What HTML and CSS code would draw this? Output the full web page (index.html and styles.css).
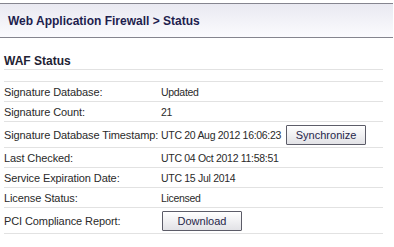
FILE: index.html
```html
<!DOCTYPE html>
<html lang="en">
<head>
    <meta charset="UTF-8">
    <title>Web Application Firewall &gt; Status</title>
    <link rel="stylesheet" href="styles.css">
</head>
<body>
    <div class="titlebar">
        <h1>Web Application Firewall &gt; Status</h1>
    </div>

    <div class="section">
        <h2>WAF Status</h2>
        <div class="spacer"></div>
        <div class="row">
            <span class="label">Signature Database:</span>
            <span class="value">Updated</span>
        </div>
        <div class="row">
            <span class="label">Signature Count:</span>
            <span class="value">21</span>
        </div>
        <div class="row tall">
            <span class="label">Signature Database Timestamp:</span>
            <span class="value">UTC 20 Aug 2012 16:06:23</span>
            <button class="btn sync">Synchronize</button>
        </div>
        <div class="row">
            <span class="label">Last Checked:</span>
            <span class="value">UTC 04 Oct 2012 11:58:51</span>
        </div>
        <div class="row">
            <span class="label">Service Expiration Date:</span>
            <span class="value">UTC 15 Jul 2014</span>
        </div>
        <div class="row">
            <span class="label">License Status:</span>
            <span class="value">Licensed</span>
        </div>
        <div class="row tall">
            <span class="label">PCI Compliance Report:</span>
            <button class="btn download">Download</button>
        </div>
    </div>
</body>
</html>
```

FILE: styles.css
```css
body { margin: 0; background: #fff; font-family: "Liberation Sans", Arial, sans-serif; color: #2a2a2a; }
.titlebar { margin-top: 3px; width: 393px; height: 33px; border-top: 1px solid #85858f; border-bottom: 1px solid #85858f; background: linear-gradient(#e9e9f1, #fbfbfe); display: flex; align-items: center; }
.titlebar h1 { margin: 0 0 0 8px; font-size: 12px; font-weight: bold; color: #1e1e4e; }
.section { width: 379px; margin-left: 4px; }
.section h2 { margin: 16px 0 0; height: 14px; line-height: 14px; font-size: 12px; font-weight: bold; color: #222233; border-bottom: 1px solid #e2e2e2; padding-bottom: 1px; }
.spacer { height: 11px; border-bottom: 1px solid #e2e2e2; }
.row { display: flex; align-items: center; height: 19px; border-bottom: 1px solid #e2e2e2; font-size: 11px; }
.row.tall { height: 25px; }
.label { width: 157px; letter-spacing: -0.1px; }
.value { font-size: 10.5px; letter-spacing: -0.3px; }
.btn { height: 20px; width: 80px; padding: 0; border: 1px solid #5c5c68; border-radius: 1px; background: linear-gradient(#ffffff, #e2e2e6); font-family: "Liberation Sans", Arial, sans-serif; font-size: 11px; color: #26264a; }
.sync { margin-left: 5px; }
.download { margin-left: 1px; }
```
